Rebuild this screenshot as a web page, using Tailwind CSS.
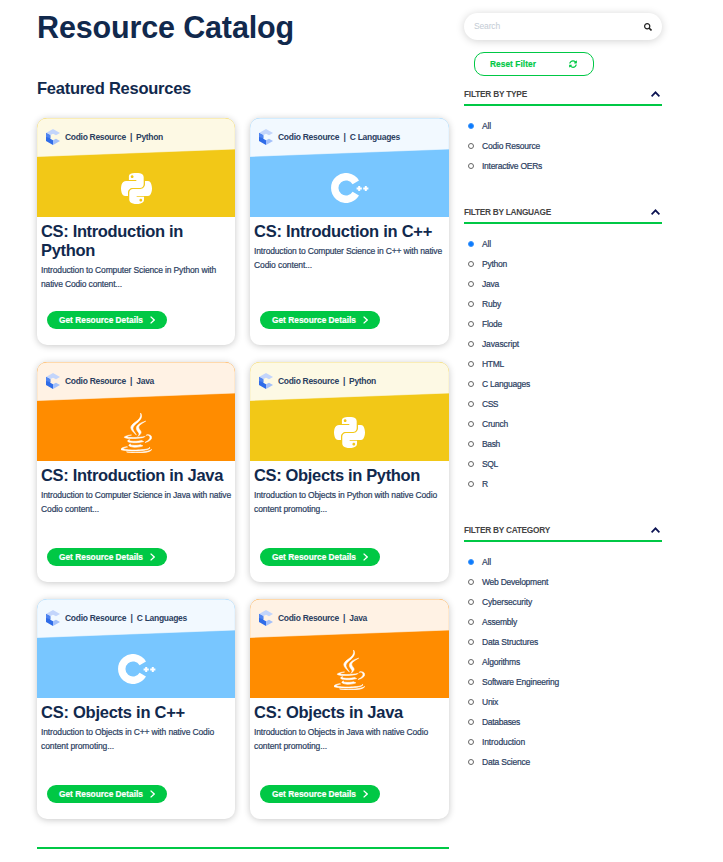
<!DOCTYPE html>
<html lang="en">
<head>
<meta charset="utf-8">
<title>Resource Catalog</title>
<script src="https://cdn.jsdelivr.net/npm/@tailwindcss/browser@4"></script>
</head>
<body class="bg-white font-['Liberation_Sans',Arial,sans-serif] text-[#11294d]">
<svg class="hidden">
  <symbol id="python" viewBox="0 32 448 448" preserveAspectRatio="none"><path d="M439.8 200.5c-7.7-30.9-22.3-54.2-53.4-54.2h-40.1v47.4c0 36.8-31.2 67.8-66.8 67.8H172.7c-29.2 0-53.4 25-53.4 54.3v101.8c0 29 25.2 46 53.4 54.3 33.8 9.9 66.3 11.7 106.8 0 26.9-7.8 53.4-23.5 53.4-54.3v-40.7H226.2v-13.6h160.2c31.1 0 42.6-21.7 53.4-54.2 11.2-33.5 10.7-65.7 0-108.6zM286.2 404c11.1 0 20.1 9.1 20.1 20.3 0 11.3-9 20.4-20.1 20.4-11 0-20.1-9.2-20.1-20.4.1-11.3 9.1-20.3 20.1-20.3zM167.8 248.1h106.8c29.7 0 53.4-24.5 53.4-54.3V91.9c0-29-24.4-50.7-53.4-55.6-35.8-5.9-74.7-5.6-106.8.1-45.2 8-53.4 24.7-53.4 55.6v40.7h106.9v13.6h-147c-31.1 0-58.3 18.7-66.8 54.2-9.8 40.7-10.2 66.1 0 108.6 7.6 31.6 25.7 54.2 56.8 54.2H101v-48.8c0-35.3 30.5-66.4 66.8-66.4zm-6.7-142.6c-11.1 0-20.1-9.1-20.1-20.3.1-11.3 9-20.4 20.1-20.4 11 0 20.1 9.2 20.1 20.4s-9 20.3-20.1 20.3z"/></symbol>
  <symbol id="java" viewBox="4 0 380 512" preserveAspectRatio="none"><path d="M277.74 312.9c9.8-6.7 23.4-12.5 23.4-12.5s-38.7 7-77.2 10.2c-47.1 3.9-97.7 4.7-123.1 1.3-60.1-8 33-30.1 33-30.1s-36.1-2.4-80.6 19c-52.5 25.4 130 37 224.5 12.1zm-85.4-32.1c-19-42.7-83.1-80.2 0-145.8C296 53.2 242.84 0 242.84 0c21.5 84.5-75.6 110.1-110.7 162.6-23.9 35.9 11.7 74.4 60.2 118.2zm114.6-176.2c.1 0-175.2 43.8-91.5 140.2 24.7 28.4-6.5 54-6.5 54s62.7-32.4 33.9-72.9c-26.9-37.8-47.5-56.6 64.1-121.3zm-6.1 270.5a12.19 12.19 0 0 1-2 2.6c128.3-33.7 81.1-118.9 19.8-97.3a17.33 17.33 0 0 0-8.2 6.3 70.45 70.45 0 0 1 11-3c31-6.5 75.5 41.5-20.6 91.4zM348 437.4s14.5 11.9-15.9 21.2c-57.9 17.5-240.8 22.8-291.6.7-18.3-7.9 16-19 26.8-21.3 11.2-2.4 17.7-2 17.7-2-20.3-14.3-131.3 28.1-56.4 40.2C232.84 509.4 401 461.3 348 437.4zM124.44 396c-78.7 22 47.9 67.4 148.1 24.5a185.89 185.89 0 0 1-28.2-13.8c-44.7 8.5-65.4 9.1-106 4.5-33.5-3.8-13.9-15.2-13.9-15.2zm179.8 97.2c-78.7 14.8-175.8 13.1-233.3 3.6 0-.1 11.8 9.7 72.4 13.6 92.2 5.9 233.8-3.3 237.1-46.9 0 0-6.4 16.5-76.2 29.7zM260.64 353c-59.2 11.4-93.5 11.1-136.8 6.6-33.5-3.5-11.6-19.7-11.6-19.7-86.8 28.8 48.2 61.4 169.5 25.9a60.37 60.37 0 0 1-21.1-12.8z" stroke="currentColor" stroke-width="7"/></symbol>
  <symbol id="cpp" viewBox="0 0 38 30"><path d="M24.8 9.3A11.3 11.3 0 1 0 24.8 20.7" fill="none" stroke="currentColor" stroke-width="7.4"/><path d="M25.6 15.5h5.2M28.2 12.9v5.2M32.2 15.5h5.2M34.8 12.9v5.2" stroke="currentColor" stroke-width="2"/></symbol>
  <symbol id="codio" viewBox="0 0 14 16"><path d="M0 4 7 0l7 4-4 2.3L7 4.8 4 6.3z" fill="#c3d5fb"/><path d="M0 4l4.3 2.2v3.6L7 11.3V16L0 12z" fill="#2f6ce8"/><path d="M0 4l4.3 2.2v3L0 8z" fill="#4f84f0"/><path d="M7 11.3l3-1.6 4 2.3-7 4z" fill="#a3c0fa"/></symbol>
</svg>
<div class="flex pl-[37px]">
  <main class="w-[412px]">
    <h1 class="h-[54px] pt-[9px] text-[30.5px] leading-9 font-bold"><span data-w="257">Resource Catalog</span></h1>
    <h2 class="mt-[24px] h-[40px] text-[16.5px] leading-[21px] font-bold"><span data-w="154">Featured Resources</span></h2>
    <div id="cards" class="grid grid-cols-[198px_199px] grid-rows-[227px_220px_220px] gap-x-[15px] gap-y-[17px]"></div>
    <div class="mt-[28px] h-[2px] bg-[#00c845]"></div>
  </main>
  <aside class="ml-[15px] w-[198px] pt-[13px]">
    <div class="flex h-[27px] items-center justify-between rounded-full px-[10px] shadow-[0_1px_8px_rgba(0,0,0,0.18)]">
      <span class="text-[8.5px] text-[#c3cbd4]" data-w="26">Search</span>
      <svg class="size-[8px]" viewBox="0 0 8 8" fill="none" stroke="#222" stroke-width="1.2"><circle cx="3.2" cy="3.2" r="2.6"/><path d="M5 5l2.5 2.5" stroke-width="1.6"/></svg>
    </div>
    <div class="mt-[12px] ml-[10px] flex h-[24px] w-[120px] items-center justify-between rounded-[10px] border border-[#00c845] pr-[16px] pl-[15px] text-[#00c845]">
      <span class="text-[8.3px] font-bold [-webkit-text-stroke:0.15px]" data-w="46">Reset Filter</span>
      <svg class="size-[8px]" viewBox="0 0 512 512" fill="currentColor"><path d="M370.72 133.28C339.458 104.008 298.888 87.962 255.848 88c-77.458.068-144.328 53.178-162.791 126.85-1.344 5.363-6.122 9.15-11.651 9.15H24.103c-7.498 0-13.194-6.807-11.807-14.176C33.933 94.924 134.813 8 256 8c66.448 0 126.791 26.136 171.315 68.685L463.03 40.97C478.149 25.851 504 36.559 504 57.941V192c0 13.255-10.745 24-24 24H345.941c-21.382 0-32.09-25.851-16.971-40.971l41.75-41.749zM32 296h134.059c21.382 0 32.09 25.851 16.971 40.971l-41.75 41.75c31.262 29.273 71.835 45.319 114.876 45.28 77.418-.07 144.315-53.144 162.787-126.849 1.344-5.363 6.122-9.15 11.651-9.15h57.304c7.498 0 13.194 6.807 11.807 14.176C478.067 417.076 377.187 504 256 504c-66.448 0-126.791-26.136-171.315-68.685L48.97 471.03C33.851 486.149 8 475.441 8 454.059V320c0-13.255 10.745-24 24-24z"/></svg>
    </div>
    <div id="filters" class="mt-[8px] flex flex-col gap-[26px]"></div>
  </aside>
</div>
<script>
const themes = {
  Python: {bg: 'bg-[#f2c817]', light: '#fdf9e4', edge: '#f8e9a6', icon: '<svg class="mt-[55px] size-[31px] text-white" fill="currentColor"><use href="#python"/></svg>'},
  'C Languages': {bg: 'bg-[#78c6ff]', light: '#f2f9ff', edge: '#c9e8ff', icon: '<svg class="ml-[1px] mt-[55px] h-[30px] w-[38px] text-white"><use href="#cpp"/></svg>'},
  Java: {bg: 'bg-[#ff8c00]', light: '#fff2e4', edge: '#ffd199', icon: '<svg class="mt-[51px] h-[40px] w-[31px] text-white" fill="currentColor"><use href="#java"/></svg>'}
};
const cards = [
  ['Python', 98, 'CS: Introduction in<br>Python', 142, 'Introduction to Computer Science in Python with', 175, 'native Codio content...', 81],
  ['C Languages', 122, 'CS: Introduction in C++', 178, 'Introduction to Computer Science in C++ with native', 188, 'Codio content...', 58],
  ['Java', 89, 'CS: Introduction in Java', 182, 'Introduction to Computer Science in Java with native', 190, 'Codio content...', 58],
  ['Python', 98, 'CS: Objects in Python', 166, 'Introduction to Objects in Python with native Codio', 183, 'content promoting...', 73],
  ['C Languages', 122, 'CS: Objects in C++', 144, 'Introduction to Objects in C++ with native Codio', 173, 'content promoting...', 73],
  ['Java', 89, 'CS: Objects in Java', 149, 'Introduction to Objects in Java with native Codio', 174, 'content promoting...', 73]
];
document.getElementById('cards').innerHTML = cards.map(([lang, hw, title, tw, a, aw, b, bw]) => {
  const t = themes[lang];
  return `<article class="flex flex-col overflow-hidden rounded-[10px] bg-white shadow-[0_1px_7px_rgba(0,0,0,0.22)]">
    <div class="relative flex h-[99px] shrink-0 justify-center ${t.bg}">
      <svg class="absolute inset-0 h-[40px] w-full" viewBox="0 0 198 40" preserveAspectRatio="none"><path d="M0 0H198V31.5L0 39z" fill="${t.edge}"/><path d="M.3 10Q.3 .8 10 .8H188Q197.7 .8 197.7 10V31L.3 38.5z" fill="${t.light}"/></svg>
      <div class="absolute top-[11px] left-[9px] flex items-center gap-[5px]"><svg class="h-[16px] w-[14px]"><use href="#codio"/></svg><span class="text-[8.5px] leading-4 font-bold whitespace-nowrap text-[#2b405f]" data-w="${hw}">Codio Resource&nbsp; |&nbsp; ${lang}</span></div>
      ${t.icon}
    </div>
    <div class="flex grow flex-col px-[4px] pt-[5px]">
      <h3 class="text-[16.5px] leading-[19px] font-bold"><span class="whitespace-nowrap" data-w="${tw}">${title}</span></h3>
      <p class="mt-[3px] text-[8.5px] leading-[14px] whitespace-nowrap text-[#2b405f] [-webkit-text-stroke:0.2px]"><span data-w="${aw}">${a}</span><br><span data-w="${bw}">${b}</span></p>
      <a class="mt-auto mb-[16px] ml-[6px] flex h-[18px] w-[120px] items-center justify-between rounded-full bg-[#00c845] pr-[12px] pl-[12px] text-[8.3px] font-bold text-white"><span class="whitespace-nowrap [-webkit-text-stroke:0.2px]" data-w="84">Get Resource Details</span><svg class="h-[8px] w-[5px]" viewBox="0 0 5 8" fill="none" stroke="#fff" stroke-width="1.3"><path d="M.6.6 4.2 4 .6 7.4"/></svg></a>
    </div>
  </article>`;
}).join('');
const filters = [
  ['FILTER BY TYPE', 63, [['All', 9], ['Codio Resource', 58], ['Interactive OERs', 60]]],
  ['FILTER BY LANGUAGE', 87, [['All', 9], ['Python', 25], ['Java', 17], ['Ruby', 19], ['Flode', 20], ['Javascript', 37], ['HTML', 22], ['C Languages', 48], ['CSS', 16], ['Crunch', 26], ['Bash', 18], ['SQL', 16], ['R', 6]]],
  ['FILTER BY CATEGORY', 86, [['All', 9], ['Web Development', 66], ['Cybersecurity', 50], ['Assembly', 35], ['Data Structures', 56], ['Algorithms', 38], ['Software Engineering', 77], ['Unix', 16], ['Databases', 38], ['Introduction', 43], ['Data Science', 48]]]
];
document.getElementById('filters').innerHTML = filters.map(([name, w, items]) => `<section>
  <div class="flex h-[22px] items-center justify-between border-b-2 border-[#00c845] pr-[2px]"><span class="text-[8.3px] font-bold whitespace-nowrap text-[#444]" data-w="${w}">${name}</span><svg class="h-[6px] w-[9px]" viewBox="0 0 9 6" fill="none" stroke="#0b1252" stroke-width="1.7"><path d="M.6 5.3 4.5 1.3 8.4 5.3"/></svg></div>
  <ul class="mt-[10px]">${items.map(([n, iw], i) => `<li class="flex h-5 items-center gap-[8px] pl-[4px]">${i ? '<span class="size-[6px] rounded-full border border-[#666]"></span>' : '<span class="size-[6px] rounded-full border border-[#3b93f8] bg-[#0a7aff]"></span>'}<span class="text-[8.5px] whitespace-nowrap text-[#2b405f] [-webkit-text-stroke:0.2px]" data-w="${iw}">${n}</span></li>`).join('')}</ul>
</section>`).join('');
// Track each label out to its designed measure once the styles are in force.
function fitLabels() {
  document.querySelectorAll('[data-w]').forEach(el => {
    el.style.letterSpacing = '0px';
    const w = el.getBoundingClientRect().width;
    const n = el.innerHTML.split('<br>')[0].replace(/&nbsp;/g, ' ').length;
    el.style.letterSpacing = ((+el.dataset.w - w) / n) + 'px';
  });
}
window.addEventListener('load', () => { fitLabels(); requestAnimationFrame(fitLabels); });
</script>
</body>
</html>
